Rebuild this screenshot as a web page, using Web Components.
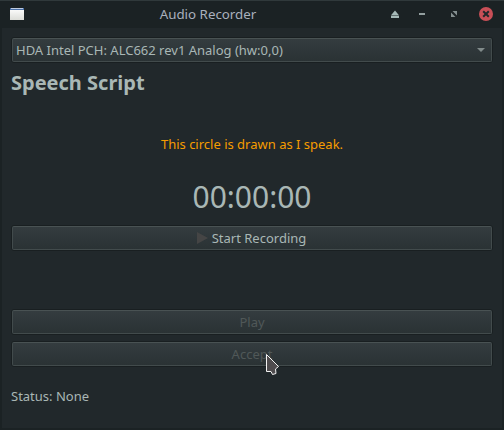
<!DOCTYPE html>
<html lang="en">
<head>
<meta charset="utf-8">
<title>Audio Recorder</title>
<style>
html,body{margin:0;height:100%;background:#1b2224;overflow:hidden}
body{font:13.33px/18px "Noto Sans",sans-serif;color:#a9b7b5}
</style>
</head>
<body>
<recorder-window></recorder-window>
<script>
const define = (name, html) => customElements.define(name, class extends HTMLElement {
  constructor() {
    super();
    this.attachShadow({mode: 'open'}).innerHTML = html;
  }
});

define('title-bar', `
<style>
:host{display:grid;grid-template-columns:88px 1fr 88px;align-items:center;height:28px;box-sizing:border-box;border-top:1px solid #30393b;padding:0 8px 2px 9px;background:#1b2224;color:#a9b0bd}
.title{text-align:center;padding:2px 89px 0 0;line-height:23px}
svg{display:block}
.controls{justify-self:end}
</style>
<svg width="16" height="14" viewBox="0 0 16 14"><defs><linearGradient id="w" x1="0" y1="0" x2="0" y2="1"><stop stop-color="#fff"/><stop offset="1" stop-color="#dcddd8"/></linearGradient></defs><path fill="url(#w)" d="M1 1h14v12H1z"/><path fill="#4a70a8" d="M1 1h14v2H1z"/><path fill="#c0cde0" d="M2 1h12v1H2z"/></svg>
<div class="title"><slot></slot></div>
<svg class="controls" width="110" height="25" viewBox="386 1 110 25">
<path fill="#a5b9b7" d="M395 10.500l4.200 5h-8.400zM391 16h8v2h-8z"/>
<path fill="#939f9f" d="M419 13h6v2h-6z"/>
<path fill="#848f90" d="M452.500 11h4.500v4.500zM451 12.500v4.500h4.500z"/>
<circle cx="486" cy="14" r="7" fill="#c94f57"/>
<path d="M483.200 11.200l5.600 5.600m0-5.600l-5.600 5.600" stroke="#22282b" stroke-width="2"/>
</svg>`);

define('push-button', `
<style>
:host{display:block;height:26px;box-sizing:border-box;border:1px solid #191f21;border-radius:3px;color:#a9b7b5}
:host([disabled]){color:#505858}
.face{height:24px;box-sizing:border-box;border:1px solid #424b4c;border-top-color:#495253;border-radius:2px;background:linear-gradient(#343c3f,#2a3234);display:flex;align-items:center;justify-content:center;font-size:13px;line-height:22px}
::slotted(svg){margin-right:4px}
</style>
<div class="face"><slot></slot></div>`);

define('combo-box', `
<style>
:host{display:block;height:26px;box-sizing:border-box;border:1px solid #191f21;border-radius:3px}
.face{height:24px;box-sizing:border-box;border:1px solid #424b4c;border-top-color:#495253;border-radius:2px;background:linear-gradient(#343c3f,#2a3234);display:flex;align-items:center;justify-content:space-between;padding:0 6px 0 3px;font-size:13px;line-height:22px}
</style>
<div class="face"><span><slot></slot></span><svg width="8" height="4"><path fill="#818b8b" d="M0 0h8L4 4z"/></svg></div>`);

define('mouse-pointer', `
<style>:host{display:block;position:absolute;left:265px;top:352px}svg{display:block}</style>
<svg width="16" height="25" viewBox="265 352 16 25"><path d="M266.500 354.500v17h4.500l1.500 3 3.500-1-.5-4.500 3-2.500z" fill="#4f4c4e" stroke="#f2f2f2" stroke-width="1"/></svg>`);

define('recorder-window', `
<style>
:host{display:block;width:504px;height:430px;position:relative;background:#1b2224}
main{display:flex;flex-direction:column;margin:0 2px;height:400px;box-sizing:border-box;padding:9px 9px 0;background:#21282b;font-size:13px}
h1{margin:6px 0 0;font-size:20px;line-height:27px;font-weight:700}
.script{margin-top:39px;text-align:center;color:#f59c00;line-height:18px}
.time{margin-top:23px;text-align:center;font-size:30px;line-height:41px}
.start{margin-top:8px}
.start svg{margin-left:-1px}
.play{margin-top:58px}
.accept{margin-top:6px}
.status{margin-top:20px}
</style>
<title-bar>Audio Recorder</title-bar>
<main>
<combo-box>HDA Intel PCH: ALC662 rev1 Analog (hw:0,0)</combo-box>
<h1>Speech Script</h1>
<div class="script">This circle is drawn as I speak.</div>
<div class="time">00:00:00</div>
<push-button class="start"><svg width="11" height="12"><path fill="#454545" d="M0 0l11 6-11 6z"/></svg>Start Recording</push-button>
<push-button class="play" disabled>Play</push-button>
<push-button class="accept" disabled>Accept</push-button>
<div class="status">Status: None</div>
</main>
<mouse-pointer></mouse-pointer>`);
</script>
</body>
</html>
